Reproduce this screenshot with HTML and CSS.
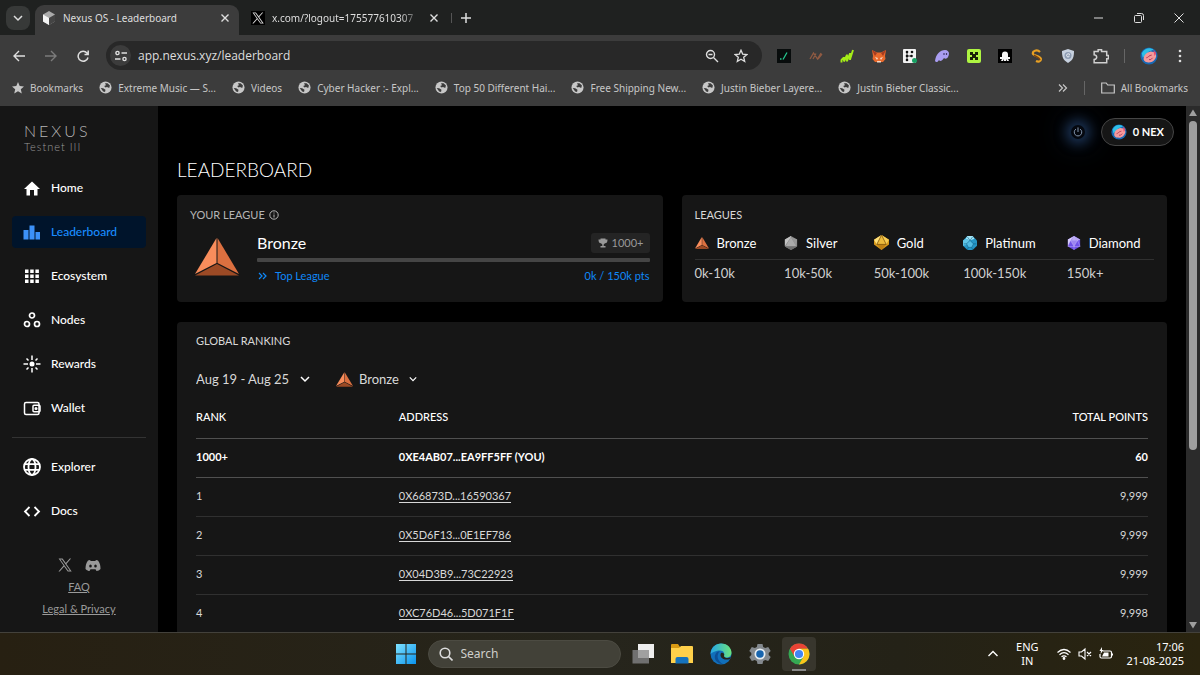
FILE: index.html
```html
<!DOCTYPE html>
<html lang="en">
<head>
<meta charset="utf-8">
<meta name="viewport" content="width=device-width, initial-scale=1">
<title>Nexus OS - Leaderboard</title>
<link rel="stylesheet" href="styles.css">
</head>
<body>
<svg class="defs" aria-hidden="true">
  <symbol id="bronze" viewBox="0 0 44 38">
    <path d="M21.5 0 0 36l21.500-11z" fill="#f98d5c"/><path d="M22.500 0 44 36 22.500 25z" fill="#dc7040"/><path d="M0 37.500 22 26l22 11.500z" fill="#9c4a25"/>
  </symbol>
  <symbol id="silver" viewBox="0 0 16 16">
    <path d="M8 0l7 4v8l-7 4-7-4V4z" fill="#858585"/><path d="M8 0L1 4v7.500L8 1z" fill="#c3c3c3"/><path d="M8 1.500l6 10H2z" fill="#aaa"/><path d="M1 12l7 4 7-4z" fill="#707070"/><path d="M8 1l7 3-1 8z" fill="#989898"/>
  </symbol>
  <symbol id="gold" viewBox="0 0 16 16">
    <path d="M8 0l8 5v5l-8 6-8-6V5z" fill="#d99a1c"/><path d="M8 0L0 5l3 5z" fill="#ffe07a"/><path d="M8 0l5 10H3z" fill="#edbb3c"/><path d="M8 0l8 5-3 5z" fill="#f8ce55"/><path d="M3 10h10l-5 6z" fill="#bf8014"/><path d="M8 0L3 10h10z" fill="none" stroke="#6b4507" stroke-width=".7"/>
  </symbol>
  <symbol id="platinum" viewBox="0 0 16 16">
    <path d="M5 0h6l5 5v6l-5 5H5l-5-5V5z" fill="#2596c6"/><path d="M5 0h6l2 3-5 2-5-2z" fill="#a4e5f7"/><path d="M0 5l3-2 5 2-3 5-5 1z" fill="#60c5e7"/><path d="M8 5l4 4-2 4H6L4 9z" fill="#52bce4"/><path d="M5 1l3 4 3-4M8 5L4 9l2 4h4l2-4zM1 9h3m8 0h3M6 13l-1 3m5-3l1 3" fill="none" stroke="#0f5f86" stroke-width=".7"/>
  </symbol>
  <symbol id="diamond" viewBox="0 0 16 16">
    <path d="M8 0l7 4v8l-7 4-7-4V4z" fill="#7051e6"/><path d="M8 0L1 4v7l3-6z" fill="#d8cdfb"/><path d="M8 0l7 4-3 1H4z" fill="#b8a6f5"/><path d="M4 5h8l-4 7z" fill="#9d86f0"/><path d="M8 0v5M4 5h8l-4 7zM1 4l3 1-3 7 7 0v4m0-4l7 0-3-7 3-1" fill="none" stroke="#d9cffb" stroke-width=".4"/>
  </symbol>
  <symbol id="globe" viewBox="0 0 14 14">
    <circle cx="7" cy="7" r="6.500" fill="#c7c7c7"/><path d="M1.800 7.500 4.500 7.800 7 9.500 6.500 11.800 4.500 11.200zM6.500 2.300 9.200 2.500 11.800 4.800 11 7.500 8.600 6.500 7 7 5.500 5.500 7.500 4.500z" fill="#3c3c3c"/>
  </symbol>
  <symbol id="cross" viewBox="0 0 10 10"><path d="M1.500 1.500l7 7m0-7l-7 7" fill="none" stroke="currentColor" stroke-width="1.400"/></symbol>
  <symbol id="chevron" viewBox="0 0 10 10"><path d="M1 3l4 4 4-4" fill="none" stroke="currentColor" stroke-width="1.500"/></symbol>
  <symbol id="x" viewBox="0 0 24 24"><path d="M1 1h6.800l5.600 7.700L20.200 1h2.200l-8 9.200L23.500 23h-6.800l-6.200-8.500L3 23H.8l8.700-10zM4 2.700 17.500 21.300h2.800L6.800 2.700z" fill="currentColor"/></symbol>
  <symbol id="avatar" viewBox="0 0 20 20">
    <circle cx="10" cy="10" r="9.500" fill="#1769b5"/><path d="M2 7c3-6 9-7 13-4l-5 2-7 7z" fill="#2ec0e8"/><path d="M4 14c0-5 3-8 8-9l5 1 1 4c-1 5-5 8-10 7-2 0-3-1-4-3z" fill="#f59a9c"/><path d="M7 12c2 0 3-3 6-3M10 14h2l2-2" fill="none" stroke="#a72e54"/><path d="M15 3l3 4-2 3z" fill="#e44b70"/>
  </symbol>
</svg>

<header class="browser">
  <div class="tabs">
    <button class="tab-search" aria-label="Search tabs"><svg class="i10"><use href="#chevron"/></svg></button>
    <div class="tab tab-active">
      <svg class="i14" viewBox="0 0 14 14"><path d="M7 0l6 3.500v7L7 14l-6-3.500v-7z" fill="#aaa"/><path d="M1 3.500 7 7v7l-6-3.500z" fill="#f4f4f4"/><path d="M7 7l6-3.500v7L7 14z" fill="#444"/></svg>
      <span class="tab-title">Nexus OS - Leaderboard</span>
      <button class="plain" aria-label="Close tab"><svg class="i10"><use href="#cross"/></svg></button>
    </div>
    <div class="tab">
      <span class="favicon-x"><svg class="i12"><use href="#x"/></svg></span>
      <span class="tab-title tab-fade">x.com/?logout=175577610307</span>
      <button class="plain" aria-label="Close tab"><svg class="i10"><use href="#cross"/></svg></button>
    </div>
    <button class="plain new-tab" aria-label="New tab"><svg class="i10" viewBox="0 0 10 10"><path d="M5 0v10M0 5h10" stroke="currentColor" stroke-width="1.500"/></svg></button>
    <div class="window-controls">
      <button class="plain" aria-label="Minimize"><svg class="i10" viewBox="0 0 10 10"><path d="M0 5h9" stroke="currentColor"/></svg></button>
      <button class="plain" aria-label="Restore"><svg class="i10" viewBox="0 0 10 10"><path d="M.5 3.500q0-1 1-1h5q1 0 1 1v5q0 1-1 1h-5q-1 0-1-1zM3 .500h4.500q2 0 2 2V7" fill="none" stroke="currentColor"/></svg></button>
      <button class="plain" aria-label="Close"><svg class="i10" viewBox="0 0 10 10"><path d="M.5.500l9 9m0-9l-9 9" stroke="currentColor"/></svg></button>
    </div>
  </div>

  <div class="toolbar">
    <div class="nav-buttons">
      <button class="plain" aria-label="Back"><svg class="i12" viewBox="0 0 12 12"><path d="M12 6H1.500M6 1 1 6l5 5" fill="none" stroke="currentColor" stroke-width="1.400"/></svg></button>
      <button class="plain dim" aria-label="Forward"><svg class="i12" viewBox="0 0 12 12"><path d="M0 6h10.500M6 1l5 5-5 5" fill="none" stroke="currentColor" stroke-width="1.400"/></svg></button>
      <button class="plain" aria-label="Reload"><svg class="i12" viewBox="0 0 12 12"><path d="M11 7.500A5 5 0 1 1 10 3l1 1.200M11.200.500v4H7.500" fill="none" stroke="currentColor" stroke-width="1.500"/></svg></button>
    </div>
    <div class="omnibox">
      <button class="site-info" aria-label="Site information"><svg class="i12" viewBox="0 0 12 12" fill="none" stroke="#e0e0e0" stroke-width="1.400"><circle cx="2.500" cy="3" r="1.600"/><circle cx="9.500" cy="9" r="1.600"/><path d="M6.500 3H12M0 9h5.500"/></svg></button>
      <input class="url" type="text" aria-label="Address" value="app.nexus.xyz/leaderboard">
      <button class="plain" aria-label="Zoom"><svg class="i14" viewBox="0 0 14 14" fill="none" stroke="currentColor" stroke-width="1.400"><circle cx="5.500" cy="5.500" r="4"/><path d="M8.500 8.500 13 13M3.500 5.500h4"/></svg></button>
      <button class="plain" aria-label="Bookmark this tab"><svg class="i14" viewBox="0 0 14 14"><path d="M7 1.200l1.700 3.900 4.200.4-3.200 2.800 1 4.200L7 10.300l-3.700 2.200 1-4.200L1.100 5.500l4.200-.4z" fill="none" stroke="currentColor" stroke-width="1.300"/></svg></button>
    </div>
    <div class="extensions">
      <svg class="i14" viewBox="0 0 14 14"><path fill="#080c0c" d="M0 0h14v14H0z"/><path d="M3 10h1.500M6 10.500 10 3.500" stroke="#24c58d" stroke-width="1.300"/></svg>
      <svg class="i14" viewBox="0 0 14 14"><path d="M1 10 4.500 4l4 6L12 4M4 10 7 4.500M9 10l4-5" fill="none" stroke="#8f5a42" stroke-width="1.300"/></svg>
      <svg class="i14" viewBox="0 0 14 14"><path d="M1.500 13.500v-3m2.500 2V8m3 4.500V5.500m3 5.500V4M1.500 11 4 8.500m0 4L7 6m0 6 3-7.500m0 6L13 1" fill="none" stroke="#a5ed17" stroke-width="1.900"/></svg>
      <svg class="i14" viewBox="0 0 14 14"><path d="M0 1l5 2.500h4L14 1l-1 6 .5 3-2.500 3H3L.5 10 1 7z" fill="#e8692c"/><path d="M0 1l5 3-2 3zM14 1 9 4l2 3z" fill="#a63b20"/><path d="M3 8l3 1-1 2zm8 0L8 9l1 2zM5 12h4v1.500H5z" fill="#f8d8c4"/></svg>
      <svg class="i14" viewBox="0 0 14 14"><rect width="13" height="14" rx="1" fill="#f2f2f2"/><path d="M4 3v8M4 7h4" fill="none" stroke="#111" stroke-width=".8"/><g fill="#111"><circle cx="4" cy="3" r="1.300"/><circle cx="4" cy="7" r="1.300"/><circle cx="4" cy="11" r="1.300"/><circle cx="9" cy="3" r="1.300"/><circle cx="8.500" cy="7" r="1.300"/></g><circle cx="11.500" cy="11.500" r="2.500" fill="#17a063"/></svg>
      <svg class="i14" viewBox="0 0 14 14"><path d="M0 12C1 5 5 1 10 1c4 0 5 4 3 7-1 2-3 2-4 1-2 3-4 4-5 2-1 2-3 3-4 1z" fill="#aa9df2"/><path d="M9 4v2m2.500-2v2" stroke="#443b70" stroke-width="1.200"/></svg>
      <svg class="i14" viewBox="0 0 14 14"><rect width="14" height="14" rx="2" fill="#aef542"/><path d="M3 3h3v2h2V3h3v3H9v2h2v3H8V9H6v2H3V8h2V6H3z" fill="#162008"/></svg>
      <svg class="i14" viewBox="0 0 14 14"><path fill="#000" d="M0 0h14v14H0z"/><path d="M4 5.500a3 3 0 1 1 6 0V8h2v2h-2l1 2H9l-1-2v2H6v-2l-1 2H3l1-2H2V8h2z" fill="#f6f6f6"/></svg>
      <svg class="i14" viewBox="0 0 14 14"><path d="M10 3C7 0 2 2 3 5c1 2 7 2 8 5 0 3-3 3-5 2" fill="none" stroke="#e8a024" stroke-width="2.200"/><path d="M4 6c2 2 5 2 6 5" fill="none" stroke="#774210" stroke-width="1.500"/></svg>
      <svg class="i14" viewBox="0 0 14 14"><path d="M7 0l6 2c0 6-1 9-6 12C2 11 1 8 1 2z" fill="#c7d1df"/><circle cx="7" cy="6.500" r="3.500" fill="#8c9bb2"/><path d="M9 5.500c-3-2-4 1-3 2s3 0 2-1" fill="none" stroke="#f4f7fb"/></svg>
      <svg class="i16" viewBox="0 0 14 14"><path d="M1 3h3.500V1.500h3V3H12v3.500h1.500v3H12V13H1v-3c3-.5 3-3.500 0-4z" fill="none" stroke="#d0d0d0" stroke-width="1.300"/></svg>
    </div>
    <span class="rule"></span>
    <button class="plain" aria-label="Profile"><svg class="i18"><use href="#avatar"/></svg></button>
    <button class="plain" aria-label="Menu"><svg class="i14" viewBox="0 0 14 14" fill="currentColor"><circle cx="7" cy="2" r="1.300"/><circle cx="7" cy="7" r="1.300"/><circle cx="7" cy="12" r="1.300"/></svg></button>
  </div>

  <nav class="bookmarks" aria-label="Bookmarks">
    <a href="#"><svg class="i12" viewBox="0 0 12 12"><path d="M6 0l1.700 4 4.300.4-3.200 2.900 1 4.200L6 9.300l-3.800 2.200 1-4.200L0 4.400 4.300 4z" fill="#c7c7c7"/></svg>Bookmarks</a>
    <a href="#"><svg class="i13"><use href="#globe"/></svg>Extreme Music — S...</a>
    <a href="#"><svg class="i13"><use href="#globe"/></svg>Videos</a>
    <a href="#"><svg class="i13"><use href="#globe"/></svg>Cyber Hacker :- Expl...</a>
    <a href="#"><svg class="i13"><use href="#globe"/></svg>Top 50 Different Hai...</a>
    <a href="#"><svg class="i13"><use href="#globe"/></svg>Free Shipping New...</a>
    <a href="#"><svg class="i13"><use href="#globe"/></svg>Justin Bieber Layere...</a>
    <a href="#"><svg class="i13"><use href="#globe"/></svg>Justin Bieber Classic...</a>
    <button class="plain more" aria-label="More bookmarks"><svg class="i10" viewBox="0 0 10 10"><path d="M1 1.500 4.500 5 1 8.500m4-7L8.500 5 5 8.500" fill="none" stroke="currentColor" stroke-width="1.200"/></svg></button>
    <span class="rule"></span>
    <a href="#"><svg class="i14" viewBox="0 0 14 14"><path d="M.700 2h4.500l1.500 2h6.600v8H.700z" fill="none" stroke="currentColor" stroke-width="1.200"/></svg>All Bookmarks</a>
  </nav>
</header>

<div class="app">
  <aside class="sidebar">
    <div class="brand"><span class="wordmark">NEXUS</span><span class="network">Testnet III</span></div>
    <nav class="menu" aria-label="Main">
      <a href="#"><svg class="i18" viewBox="0 0 18 18"><path d="M9 2.500 17 10h-2.500v6.500H11V11H7v5.500H3.500V10H1z" fill="currentColor"/></svg>Home</a>
      <a href="#" class="current" aria-current="page"><svg class="i18" viewBox="0 0 18 18"><path d="M.5 7H5.500v9.500H.5zM6.500 2.500h5v14h-5zM12.500 9h4.500v7.500h-4.500z" fill="#3c91f8"/></svg>Leaderboard</a>
      <a href="#"><svg class="i18" viewBox="0 0 18 18"><path d="M2 2.500h3.500V6H2zm5.200 0h3.500V6H7.200zm5.200 0h3.500V6h-3.500zM2 7.500h3.500V11H2zm5.200 0h3.500V11H7.200zm5.200 0h3.500V11h-3.500zM2 12.500h3.500V16H2zm5.200 0h3.500V16H7.200zm5.200 0h3.500V16h-3.500z" fill="currentColor"/></svg>Ecosystem</a>
      <a href="#"><svg class="i18" viewBox="0 0 18 18" fill="none" stroke="currentColor" stroke-width="1.700"><circle cx="9" cy="4.500" r="2.500"/><circle cx="4" cy="13" r="2.500"/><circle cx="14" cy="13" r="2.500"/></svg>Nodes</a>
      <a href="#"><svg class="i18" viewBox="0 0 18 18"><circle cx="9" cy="9" r="2.500" fill="currentColor"/><path d="M9 .500V5m0 8v4.500M.500 9H5m8 0h4.500M3.500 3.500l2 2m7 7 2 2M3.500 14.500l2-2m7-7 2-2" stroke="currentColor" stroke-width="1.500" fill="none"/></svg>Rewards</a>
      <a href="#"><svg class="i18" viewBox="0 0 18 18" fill="none" stroke="currentColor" stroke-width="1.500"><rect x="1.500" y="3.500" width="14.500" height="12" rx="1.500"/><rect x="10" y="6.200" width="7" height="6.500" rx="1"/><circle cx="13" cy="9.500" r=".8"/></svg>Wallet</a>
      <hr>
      <a href="#"><svg class="i18" viewBox="0 0 18 18" fill="none" stroke="currentColor" stroke-width="1.800"><circle cx="9" cy="9" r="8"/><ellipse cx="9" cy="9" rx="3.500" ry="8"/><path d="M1.500 6.200h15M1.500 11.800h15"/></svg>Explorer</a>
      <a href="#"><svg class="i18" viewBox="0 0 18 18"><path d="M6.500 5 2 9.500 6.500 14M11.500 5 16 9.500 11.500 14" fill="none" stroke="currentColor" stroke-width="1.800"/></svg>Docs</a>
    </nav>
    <footer class="side-footer">
      <div class="social">
        <a href="#" aria-label="X"><svg class="i14"><use href="#x"/></svg></a>
        <a href="#" aria-label="Discord"><svg class="i16" viewBox="0 0 16 16"><path d="M5 3 3 3.500C1 6 .5 9 .500 12c1.500 1.500 3 2 4 2l1-1.700h5l1 1.700c1.500 0 3-.8 4-2 0-3-.5-6-2.500-8.500L11 3l-.7 1H5.700zM5.500 7.500a1.300 1.500 0 1 1 0 3 1.300 1.500 0 0 1 0-3zm5 0a1.300 1.500 0 1 1 0 3 1.300 1.500 0 0 1 0-3z" fill="currentColor" fill-rule="evenodd"/></svg></a>
      </div>
      <a href="#">FAQ</a>
      <a href="#">Legal &amp; Privacy</a>
    </footer>
  </aside>

  <main class="content">
    <div class="account">
      <button class="power" aria-label="Connect"><svg class="i10" viewBox="0 0 12 12"><path d="M3.500 2.500a4.500 4.500 0 1 0 5 0M6 .500V6" fill="none" stroke="#8497b0" stroke-width="1.200"/></svg></button>
      <button class="balance"><svg class="i16"><use href="#avatar"/></svg>0 NEX</button>
    </div>
    <h1>LEADERBOARD</h1>

    <div class="cards">
      <section class="card">
        <h2 class="muted">YOUR LEAGUE <svg class="i10" viewBox="0 0 10 10" fill="none" stroke="currentColor"><circle cx="5" cy="5" r="4.200"/><path d="M5 4.500V7.500M5 2.500v1"/></svg></h2>
        <div class="league">
          <svg class="league-mark"><use href="#bronze"/></svg>
          <div class="league-info">
            <div class="split">
              <strong class="league-name">Bronze</strong>
              <span class="place"><svg class="i10" viewBox="0 0 10 10"><path d="M2.500.500h5v1H9.500c0 2.500-.5 3.500-2.500 3.700L5.700 6.500V8H7.500v1.500h-5V8h1.800V6.500L3 5.200C1 5 .5 4 .5 1.500h2z" fill="currentColor"/></svg>1000+</span>
            </div>
            <div class="progress" role="progressbar" aria-label="League progress" aria-valuenow="0" aria-valuemin="0" aria-valuemax="150"></div>
            <div class="split goal">
              <span class="top-league"><svg class="i10" viewBox="0 0 10 10"><path d="M1 2l3 3-3 3m4-6l3 3-3 3" fill="none" stroke="currentColor" stroke-width="1.200"/></svg>Top League</span>
              <span>0k / 150k pts</span>
            </div>
          </div>
        </div>
      </section>
      <section class="card">
        <h2>LEAGUES</h2>
        <table class="leagues">
          <thead><tr>
            <th><span><svg class="i14"><use href="#bronze"/></svg>Bronze</span></th>
            <th><span><svg class="i14"><use href="#silver"/></svg>Silver</span></th>
            <th><span><svg class="i15"><use href="#gold"/></svg>Gold</span></th>
            <th><span><svg class="i14"><use href="#platinum"/></svg>Platinum</span></th>
            <th><span><svg class="i14"><use href="#diamond"/></svg>Diamond</span></th>
          </tr></thead>
          <tbody><tr><td>0k-10k</td><td>10k-50k</td><td>50k-100k</td><td>100k-150k</td><td>150k+</td></tr></tbody>
        </table>
      </section>
    </div>

    <section class="card ranking">
      <h2>GLOBAL RANKING</h2>
      <div class="filters">
        <div class="filter"><select aria-label="Week"><option>Aug 19 - Aug 25</option></select><svg class="i10"><use href="#chevron"/></svg></div>
        <div class="filter"><svg class="i17"><use href="#bronze"/></svg><select aria-label="League"><option>Bronze</option></select><svg class="i8"><use href="#chevron"/></svg></div>
      </div>
      <table class="ranks">
        <thead><tr><th>RANK</th><th>ADDRESS</th><th>TOTAL POINTS</th></tr></thead>
        <tbody>
          <tr class="you"><td>1000+</td><td>0XE4AB07...EA9FF5FF (YOU)</td><td>60</td></tr>
          <tr><td>1</td><td><a href="#">0X66873D...16590367</a></td><td>9,999</td></tr>
          <tr><td>2</td><td><a href="#">0X5D6F13...0E1EF786</a></td><td>9,999</td></tr>
          <tr><td>3</td><td><a href="#">0X04D3B9...73C22923</a></td><td>9,999</td></tr>
          <tr><td>4</td><td><a href="#">0XC76D46...5D071F1F</a></td><td>9,998</td></tr>
        </tbody>
      </table>
    </section>
  </main>

  <div class="scrollbar" aria-hidden="true">
    <svg class="i10" viewBox="0 0 10 10"><path d="M5 1.500 9 8H1z" fill="#9f9f9f"/></svg>
    <div class="thumb"></div>
    <svg class="i10 scroll-down" viewBox="0 0 10 10"><path d="M5 8.500 9 2H1z" fill="#9f9f9f"/></svg>
  </div>
</div>

<footer class="taskbar">
  <div class="launcher">
    <button class="plain" aria-label="Start"><svg class="i22" viewBox="0 0 22 22"><defs><linearGradient id="win" x2="1" y2="1"><stop stop-color="#7fe3ff"/><stop offset="1" stop-color="#0a93ee"/></linearGradient></defs><path d="M1 1h9.500v9.500H1zM11.500 1H21v9.500h-9.500zM1 11.500h9.500V21H1zM11.500 11.500H21V21h-9.500z" fill="url(#win)"/></svg></button>
    <label class="search"><svg class="i14" viewBox="0 0 14 14"><circle cx="6" cy="6" r="4.800" fill="none" stroke="#ddd" stroke-width="1.600"/><path d="M9.500 9.500 13.500 13.500" stroke="#ddd" stroke-width="1.600"/></svg><input type="search" placeholder="Search" aria-label="Search"></label>
    <button class="plain" aria-label="Task view"><svg class="i22" viewBox="0 0 22 22"><path d="M6 1h16v14H6z" fill="#eee"/><path d="M.500 7H17v13.500H.5z" fill="#707070"/><path d="M6 7h11v8H6z" fill="#a0a0a0"/></svg></button>
    <button class="plain" aria-label="File Explorer"><svg class="i22" viewBox="0 0 22 22"><path d="M0 2q0-1 1-1h6l2 3h5v5H0z" fill="#d99a13"/><path d="M0 5h8l2-2h11q1 0 1 1v16H0z" fill="#ffd04a"/><path d="M4.500 20.500V16q0-2 2-2h9q2 0 2 2v4.500z" fill="#1673bd"/></svg></button>
    <button class="plain" aria-label="Edge"><svg class="i22" viewBox="0 0 22 22"><defs><linearGradient id="edge"><stop stop-color="#25a5e6"/><stop offset="1" stop-color="#6be47d"/></linearGradient></defs><circle cx="11" cy="11" r="10.500" fill="#116fba"/><path d="M.500 11C1 4 6 .500 11 .500c7 0 10.500 5 10.500 9 0 3-2 5-5 5-2 0-3-1-2.500-2 1-2-.5-5-4-5-4 0-8 2-9.500 3.500z" fill="url(#edge)"/><path d="M10 8c-4 4-3 10 3 13-7 0-11-7-6-12z" fill="#0d4f96"/><path d="M11 10c-2 4 2 8 9 6l1-2c-3 2-7 1-7-1 1-2-1-4-3-3z" fill="#26251b"/></svg></button>
    <button class="plain" aria-label="Settings"><svg class="i22" viewBox="0 0 22 22"><path d="M8.500 1h5l.7 3 2 1 3-1 2.500 4-2 2v2l2 2-2.500 4-3-1-2 1-.7 3h-5l-.7-3-2-1-3 1L.300 14l2-2v-2l-2-2 2.500-4 3 1 2-1z" fill="#84898e"/><circle cx="11" cy="11" r="5.500" fill="#e7edf2"/><circle cx="11" cy="11" r="3.800" fill="#1764ae"/></svg></button>
    <button class="plain active-app" aria-label="Chrome"><svg class="i22" viewBox="0 0 22 22"><circle cx="11" cy="11" r="10.500" fill="#35a853"/><path d="M1.900 5.800A10.500 10.500 0 0 1 20.100 5.800H11L6.500 13.600z" fill="#e94335"/><path d="M20.100 5.800A10.500 10.500 0 0 1 11 21.500l4.600-7.900L11 5.800z" fill="#fbc31a"/><circle cx="11" cy="11" r="5.200" fill="#fff"/><circle cx="11" cy="11" r="4.100" fill="#4285f4"/></svg></button>
  </div>
  <div class="tray">
    <button class="plain" aria-label="Show hidden icons"><svg class="i10" viewBox="0 0 10 10"><path d="M.5 7 5 2.500 9.500 7" fill="none" stroke="currentColor" stroke-width="1.400"/></svg></button>
    <span class="lang">ENG<br>IN</span>
    <span class="status">
      <svg class="i14" viewBox="0 0 14 14" fill="none" stroke="currentColor" stroke-width="1.200"><path d="M.5 5.500q6.500-6 13 0M2.500 7.700q4.500-4 9 0M4.500 9.800q2.500-2 5 0"/><circle cx="7" cy="11.500" r=".8" fill="currentColor"/></svg>
      <svg class="i14" viewBox="0 0 14 14" fill="none" stroke="currentColor" stroke-width="1.100"><path d="M1 5h2.500L7 2v10L3.500 9H1zM9 5l4 4m0-4L9 9"/></svg>
      <svg class="i14" viewBox="0 0 14 14"><path d="M4 4h7q1.500 0 1.500 1.500v4Q12.500 11 11 11H2.500Q1 11 1 9.500V7" fill="none" stroke="currentColor" stroke-width="1.200"/><path d="M5 5.500h4.500v4H3z" fill="currentColor"/><path d="M13 6.500h1v2h-1zM3 0 .500 4H2L1.500 7 4.500 3H3z" fill="currentColor"/></svg>
    </span>
    <time class="clock" datetime="2025-08-21T17:06">17:06<br>21-08-2025</time>
  </div>
</footer>
</body>
</html>
```

FILE: styles.css
```css
* { box-sizing: border-box; }
body {
  margin: 0;
  height: 100vh;
  display: flex;
  flex-direction: column;
  overflow: hidden;
  background: #000;
  color: #fff;
  font: 12px/16px "Noto Sans", "Open Sans", sans-serif;
}
a { color: inherit; text-decoration: none; }
button, input, select { font: inherit; color: inherit; }
h1, h2 { margin: 0; font-weight: 400; }
svg { display: block; flex: none; }
.defs { position: absolute; width: 0; height: 0; }
.i8 { width: 8px; height: 8px; }
.i10 { width: 10px; height: 10px; }
.i12 { width: 12px; height: 12px; }
.i13 { width: 13px; height: 13px; }
.i14 { width: 14px; height: 14px; }
.i15 { width: 15px; height: 15px; }
.i16 { width: 16px; height: 16px; }
.i17 { width: 17px; height: 17px; }
.i18 { width: 18px; height: 18px; }
.i22 { width: 22px; height: 22px; }
.plain { display: flex; padding: 0; border: 0; background: none; }
.dim { color: #7b7b7b; }
.rule { width: 1px; height: 14px; background: #666; }

/* Browser frame */
.browser { flex: none; background: #3c3c3c; color: #dedede; }
.tabs {
  display: flex;
  align-items: center;
  height: 35px;
  padding: 0 16px 0 6px;
  background: #1f2120;
  font-size: 10px;
}
.tab-search {
  display: grid;
  place-items: center;
  width: 24px;
  height: 24px;
  margin-right: 5px;
  padding: 0;
  border: 0;
  border-radius: 8px;
  background: #373938;
}
.tab {
  display: flex;
  align-items: center;
  gap: 7px;
  width: 212px;
  height: 30px;
  margin-top: 5px;
  padding: 0 12px 4px;
}
.tab-active {
  width: 204px;
  padding: 0 9px 4px 7px;
  border-radius: 9px 9px 0 0;
  background: #3c3c3c;
}
.tab-title { flex: 1; min-width: 0; overflow: hidden; white-space: nowrap; }
.tab-fade { mask-image: linear-gradient(90deg, #000 85%, transparent); }
.favicon-x { display: grid; place-items: center; width: 14px; height: 14px; background: #000; }
.new-tab { padding-left: 9px; border-left: 1px solid #555; }
.window-controls { display: flex; gap: 30px; margin-left: auto; }

.toolbar { display: flex; align-items: center; gap: 15px; height: 40px; padding: 1px 13px 0; }
.nav-buttons { display: flex; gap: 20px; margin-right: 2px; }
.omnibox {
  flex: 1;
  display: flex;
  align-items: center;
  gap: 15px;
  height: 29px;
  padding: 0 14px 0 4px;
  border-radius: 15px;
  background: #282828;
}
.site-info {
  display: grid;
  place-items: center;
  width: 21px;
  height: 21px;
  padding: 0;
  border: 0;
  border-radius: 50%;
  background: #3c3c3c;
}
.url {
  flex: 1;
  min-width: 0;
  margin-left: -8px;
  padding: 0;
  border: 0;
  outline: 0;
  background: none;
  font-family: "Open Sans", sans-serif;
  font-size: 12px;
}
.extensions { flex: 0 1 332px; display: flex; align-items: center; justify-content: space-between; }

.bookmarks {
  display: flex;
  align-items: center;
  gap: 16px;
  height: 31px;
  padding: 0 12px 6px;
  overflow: hidden;
  font-size: 10px;
  white-space: nowrap;
  color: #c7c7c7;
}
.bookmarks a { display: flex; align-items: center; gap: 6px; }
.more { margin-left: auto; }

/* Application */
.app {
  flex: 1;
  min-height: 0;
  display: grid;
  grid-template-columns: 158px minmax(0, 1fr) 14px;
  font: 13px/16px Lato, sans-serif;
}
.sidebar {
  display: flex;
  flex-direction: column;
  padding: 16px 12px 15px;
  background: #161616;
}
.brand { display: grid; padding-left: 12px; color: #b5b5b5; font-weight: 300; }
.wordmark { font-size: 16px; line-height: 18px; letter-spacing: 3px; }
.network { font-size: 11px; line-height: 14px; letter-spacing: 1px; color: #999; }
.menu { display: grid; gap: 12px; margin-top: 18px; font-size: 12px; font-weight: 500; }
.menu a {
  display: flex;
  align-items: center;
  gap: 10px;
  height: 32px;
  padding-left: 11px;
  padding-bottom: 1px;
  border-radius: 4px;
}
.menu .current { background: #00142b; color: #1a8cff; }
.menu hr { width: 100%; height: 1px; margin: 1px 0; border: 0; background: #333; }
.side-footer {
  display: grid;
  justify-items: center;
  gap: 6px;
  margin-top: auto;
  color: #9a9a9a;
  font-size: 11px;
}
.side-footer > a { text-decoration: underline; }
.social { display: flex; align-items: center; gap: 13px; }

.content { min-width: 0; padding: 12px 19px 0; overflow: hidden; }
.account {
  display: flex;
  justify-content: flex-end;
  align-items: center;
  gap: 16px;
  margin-right: -7px;
}
.power {
  display: grid;
  place-items: center;
  width: 14px;
  height: 14px;
  padding: 0;
  border: 0;
  border-radius: 50%;
  background: #05080f;
  box-shadow: 0 0 12px 5px #1b3354, 0 0 32px 8px #0a1322;
}
.balance {
  display: flex;
  align-items: center;
  gap: 6px;
  height: 28px;
  padding: 0 9px;
  border: 1px solid #454545;
  border-radius: 14px;
  background: #161616;
  font-size: 11px;
  font-weight: 700;
}
h1 { margin: 10px 0 12px; font-size: 19px; line-height: 27px; font-weight: 300; }
.cards { display: grid; grid-template-columns: 1fr 1fr; gap: 19px; }
.card { min-height: 107px; padding: 12px 13px; border-radius: 4px; background: #161616; }
.card h2 { display: flex; align-items: center; gap: 4px; font-size: 11px; line-height: 16px; color: #d8d8d8; }
.card .muted { color: #b5b5b5; }
.league { display: flex; gap: 18px; padding: 10px 0 0 5px; }
.league-mark { width: 44px; height: 38px; margin-top: 5px; }
.league-info { flex: 1; }
.split { display: flex; align-items: center; justify-content: space-between; }
.league-name { font-size: 16px; font-weight: 400; }
.place {
  display: flex;
  align-items: center;
  gap: 4px;
  height: 20px;
  padding: 0 6px 0 7px;
  border-radius: 3px;
  background: #242424;
  color: #999;
  font-size: 11px;
}
.progress { height: 4px; margin: 5px 0 6px; border-radius: 1px; background: #454545; }
.goal { font-size: 11px; color: #0f88f8; }
.top-league { display: flex; align-items: center; gap: 7px; padding-left: 1px; }

table { width: 100%; border-collapse: collapse; }
th, td { padding: 0; text-align: left; font-weight: 400; }
.leagues { margin-top: 8px; }
.leagues th { height: 28px; border-bottom: 1px solid #303030; }
.leagues td { height: 28px; color: #d0d0d0; }
.leagues th:nth-child(-n+3) { width: 19.5%; }
.leagues th:nth-child(4) { width: 22.5%; }
.leagues span { display: flex; align-items: center; gap: 8px; padding-bottom: 4px; }

.ranking { margin-top: 20px; padding: 11px 19px; }
.filters { display: flex; gap: 26px; margin-top: 21px; }
.filter { display: flex; align-items: center; gap: 10px; }
.filter .i17 { margin-right: -4px; }
.filter select { height: 18px; padding: 0; border: 0; outline: 0; background: none; appearance: none; color: #d8d8d8; }
.ranks { margin-top: 8px; font-size: 11px; }
.ranks th { height: 42px; padding-top: 1px; border-bottom: 1px solid #505050; font-weight: 500; }
.ranks th:first-child { width: 21.3%; }
.ranks td { height: 39px; padding-bottom: 2px; border-bottom: 1px solid #303030; color: #d8d8d8; }
.ranks .you td { border-color: #505050; color: #fff; font-weight: 700; }
.ranks a { border-bottom: 1px solid #d8d8d8; }
.ranks :is(th, td):last-child { text-align: right; }

.scrollbar {
  display: flex;
  flex-direction: column;
  align-items: center;
  padding: 2px 0;
  background: #2b2b2b;
}
.thumb { width: 8px; height: 63%; margin-top: 3px; border-radius: 4px; background: #9f9f9f; }
.scroll-down { margin-top: auto; }

/* Taskbar */
.taskbar {
  flex: none;
  display: grid;
  grid-template-columns: 1fr auto 1fr;
  align-items: center;
  height: 43px;
  border-top: 1px solid #43413b;
  background: linear-gradient(90deg, #272012, #26251c 50%, #242217 75%, #2a240f);
  font-size: 11px;
}
.launcher { grid-column: 2; display: flex; align-items: center; gap: 17px; margin-left: 10px; }
.search {
  display: flex;
  align-items: center;
  gap: 8px;
  width: 193px;
  height: 28px;
  margin: 0 -6px;
  padding: 0 10px;
  border: 1px solid #4c4b42;
  border-radius: 14px;
  background: #424138;
  font-size: 12px;
}
.search input { flex: 1; min-width: 0; padding: 0; border: 0; outline: 0; background: none; }
.search input::placeholder { color: #cfcfcb; opacity: 1; }
.active-app {
  padding: 6px;
  margin-left: -6px;
  border-radius: 4px;
  background: linear-gradient(#888, #888) 50% 100% / 14px 2px no-repeat #38362d;
}
.tray { display: flex; justify-content: flex-end; align-items: center; gap: 18px; padding-right: 16px; line-height: 14px; }
.lang { text-align: center; }
.status { display: flex; gap: 7px; margin-right: -4px; }
.clock { text-align: right; }
```
